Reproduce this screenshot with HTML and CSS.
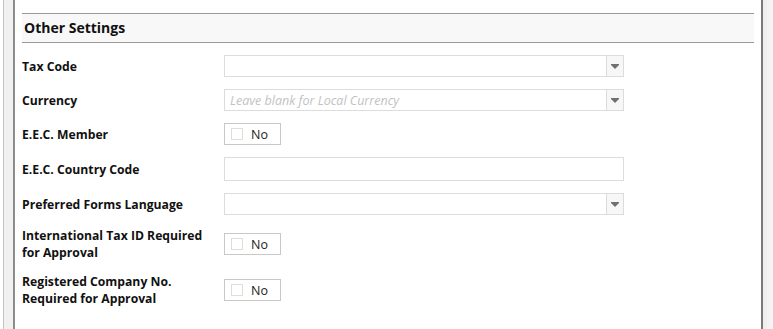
FILE: index.html
```html
<!DOCTYPE html>
<html lang="en">
<head>
    <meta charset="UTF-8">
    <meta name="viewport" content="width=device-width, initial-scale=1.0">
    <title>Other Settings</title>
    <link rel="stylesheet" href="styles.css">
</head>
<body>
    <div class="frame">
        <div class="side-left"></div>

        <div class="panel">
            <div class="section-head">Other Settings</div>

            <div class="form">
                <div class="row">
                    <div class="label">Tax Code</div>
                    <div class="combo">
                        <input type="text" class="combo-text">
                        <span class="combo-btn"><svg width="8" height="5" viewBox="0 0 8 5"><path d="M0 0h8v1L4 5 0 1z" fill="#707070"/></svg></span>
                    </div>
                </div>

                <div class="row">
                    <div class="label">Currency</div>
                    <div class="combo">
                        <input type="text" class="combo-text" placeholder="Leave blank for Local Currency">
                        <span class="combo-btn"><svg width="8" height="5" viewBox="0 0 8 5"><path d="M0 0h8v1L4 5 0 1z" fill="#707070"/></svg></span>
                    </div>
                </div>

                <div class="row">
                    <div class="label">E.E.C. Member</div>
                    <label class="toggle"><span class="check"></span>No</label>
                </div>

                <div class="row">
                    <div class="label">E.E.C. Country Code</div>
                    <input type="text" class="field">
                </div>

                <div class="row">
                    <div class="label">Preferred Forms Language</div>
                    <div class="combo">
                        <input type="text" class="combo-text">
                        <span class="combo-btn"><svg width="8" height="5" viewBox="0 0 8 5"><path d="M0 0h8v1L4 5 0 1z" fill="#707070"/></svg></span>
                    </div>
                </div>

                <div class="row">
                    <div class="label">International Tax ID Required for Approval</div>
                    <label class="toggle"><span class="check"></span>No</label>
                </div>

                <div class="row">
                    <div class="label">Registered Company No. Required for Approval</div>
                    <label class="toggle"><span class="check"></span>No</label>
                </div>
            </div>
        </div>

        <div class="side-right"></div>
    </div>
</body>
</html>
```

FILE: styles.css
```css
html, body {
    margin: 0;
    height: 100%;
    background-color: #fff;
    font-family: "Open Sans", "Noto Sans", Arial, sans-serif;
    color: #1a1a1a;
}
.frame {
    display: flex;
    height: 100%;
}
.side-left {
    width: 9px;
    margin-left: 3px;
    background-color: #f0f0f0;
    border-left: 1px solid #c4c4c4;
    border-right: 2px solid #8c8c8c;
}
.side-right {
    width: 10px;
    background: linear-gradient(to right, #ededed, #f7f7f7);
    border-left: 2px solid #7a7a7a;
}
.panel {
    flex: 1;
    padding: 13px 7px 0 7px;
}
.section-head {
    height: 28px;
    line-height: 28px;
    padding-left: 2px;
    background-color: #f8f8f8;
    border-top: 1px solid #9a9a9a;
    border-bottom: 1px solid #9a9a9a;
    font-size: 14px;
    font-weight: bold;
    color: #111;
}
.form {
    display: flex;
    flex-direction: column;
    gap: 12px;
    padding-top: 12px;
}
.row {
    display: flex;
    align-items: center;
}
.label {
    width: 195px;
    padding-right: 7px;
    font-size: 12.2px;
    line-height: 17px;
    font-weight: bold;
    color: #111;
}
.combo {
    display: flex;
    width: 400px;
    height: 22px;
    box-sizing: border-box;
    border: 1px solid #dcdcdc;
    background-color: #fff;
}
.combo-text {
    flex: 1;
    border: none;
    outline: none;
    padding: 0 5px;
    font-family: inherit;
    font-size: 12.5px;
    background: transparent;
}
.combo-text::placeholder {
    color: #c2c2c2;
    font-style: italic;
}
.combo-btn {
    width: 16px;
    border-left: 1px solid #dcdcdc;
    background-color: #f7f7f7;
    display: flex;
    align-items: center;
    justify-content: center;
}
.field {
    width: 400px;
    height: 24px;
    box-sizing: border-box;
    border: 1px solid #dcdcdc;
    padding: 0 5px;
    outline: none;
    font-family: inherit;
    font-size: 12px;
}
.toggle {
    display: flex;
    align-items: center;
    gap: 8px;
    width: 57px;
    height: 22px;
    box-sizing: border-box;
    padding-left: 6px;
    border: 1px solid #c8c8c8;
    font-size: 12.5px;
    color: #222;
}
.check {
    width: 12px;
    height: 12px;
    box-sizing: border-box;
    border: 1px solid #dedede;
    background-color: #fff;
}
```
